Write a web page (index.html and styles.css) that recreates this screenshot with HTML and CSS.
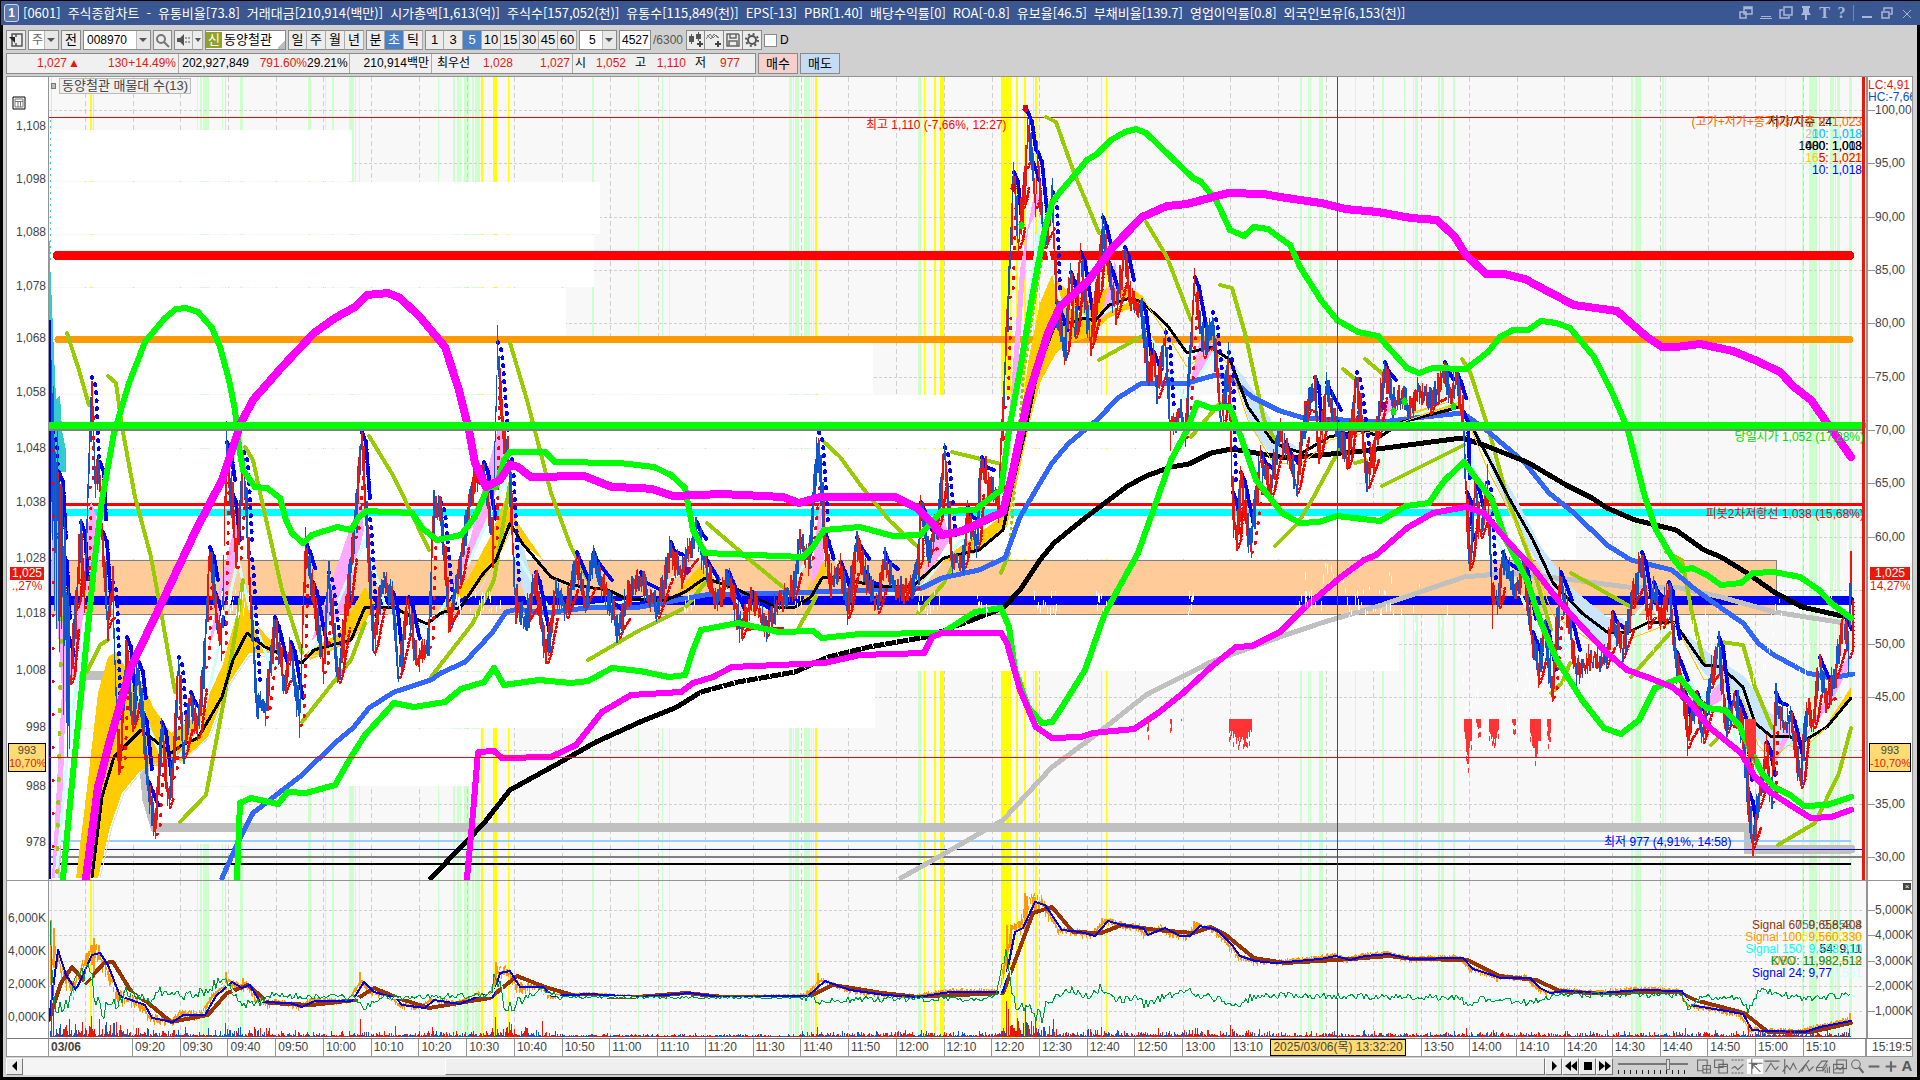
FILE: index.html
```html
<!DOCTYPE html>
<html lang="ko">
<head>
<meta charset="utf-8">
<title>[0601] 주식종합차트</title>
<link rel="stylesheet" href="styles.css">
</head>
<body>
<header class="title">
  <span class="title-num">1</span>
  <h1 class="title-text"><span>[0601]</span><span>주식종합차트</span><span>-</span><span>유통비율[73.8]</span><span>거래대금[210,914(백만)]</span><span>시가총액[1,613(억)]</span><span>주식수[157,052(천)]</span><span>유통수[115,849(천)]</span><span>EPS[-13]</span><span>PBR[1.40]</span><span>배당수익률[0]</span><span>ROA[-0.8]</span><span>유보율[46.5]</span><span>부채비율[139.7]</span><span>영업이익률[0.8]</span><span>외국인보유[6,153(천)]</span></h1>
  <div class="title-tools">
    <button aria-label="분리"><svg width="14" height="14"><path d="M5 1h8v7H5zM5 2.5h8M1 6h6v6H1z" fill="none" stroke="#a9b8da" stroke-width="1.500"/></svg></button>
    <button aria-label="접기"><svg width="14" height="14"><path d="M1 12.500h12M2 10.500h10" stroke="#a9b8da"/></svg></button>
    <button aria-label="복사"><svg width="14" height="14"><path d="M5 1h8v8H5zM4 4H1v8h9v-2" fill="none" stroke="#a9b8da" stroke-width="1.500"/></svg></button>
    <button aria-label="고정"><svg width="14" height="14"><path d="M3 0h8v2h-1v4l2 3H2l2-3V2H3zM6 9h2v5H6z" fill="#a9b8da"/></svg></button>
    <button class="glyph" aria-label="글꼴">T</button>
    <button class="glyph" aria-label="도움말">?</button>
    <i class="sep"></i>
    <button aria-label="최소화"><svg width="14" height="14"><path d="M2 11h10" stroke="#a9b8da" stroke-width="2"/></svg></button>
    <button aria-label="이전 크기"><svg width="14" height="14"><path d="M4 5V2h8v6h-2M2 6h7v6H2z" fill="none" stroke="#a9b8da" stroke-width="1.500"/></svg></button>
    <button aria-label="닫기"><svg width="14" height="14"><path d="M3 4l8 8M11 4l-8 8" stroke="#a9b8da"/></svg></button>
  </div>
</header>

<div class="frame">
<div class="toolbar">
  <button class="ib w20" aria-label="목록"><svg width="16" height="14"><path d="M4 1h10v12H4zM8 1v3M8 10v3" fill="none" stroke="#555" stroke-width="1.500"/><path d="M1 4l6 6V4z" fill="#222"/></svg></button>
  <select class="combo w31 dim" aria-label="구분"><option>주</option></select>
  <button class="ib w20">전</button>
  <select class="combo w68" aria-label="종목코드"><option>008970</option></select>
  <button class="ib w19" aria-label="검색"><svg width="15" height="15"><circle cx="6" cy="6" r="4" fill="none" stroke="#777" stroke-width="2"/><path d="M9 9l5 5" stroke="#777" stroke-width="2"/></svg></button>
  <div class="group"><button class="ib w19" aria-label="소리"><svg width="15" height="14"><path d="M1 5h3l4-4v12L4 9H1z" fill="#555"/><path d="M10 4v2M10 8v2M13 4v2M13 8v2" stroke="#555"/></svg></button><button class="ib w10" aria-label="소리 메뉴"><i class="tri"></i></button></div>
  <div class="name"><b>신</b><span>동양철관</span></div>
  <div class="group"><button class="ib">일</button><button class="ib">주</button><button class="ib">월</button><button class="ib">년</button></div>
  <div class="group"><button class="ib">분</button><button class="ib on">초</button><button class="ib">틱</button></div>
  <div class="group"><button class="ib">1</button><button class="ib">3</button><button class="ib on">5</button><button class="ib">10</button><button class="ib">15</button><button class="ib">30</button><button class="ib">45</button><button class="ib">60</button></div>
  <select class="combo w38 mid" aria-label="간격"><option>5</option></select>
  <input class="num" aria-label="봉 개수" value="4527"><span class="total">/6300</span>
  <div class="group icons">
    <button class="ib" aria-label="봉 추가"><svg width="16" height="16"><path d="M1 4h5v6H1zM8 2h5v5H8zM3 2h1v10H3zM10 0h1v9h-1z" fill="#555"/><path d="M12 9v6M9 12h6" stroke="#444" stroke-width="2"/></svg></button>
    <button class="ib" aria-label="지표 추가"><svg width="16" height="16"><path d="M0 7l4-5 3 4 3-3 3 3M1 3l4 4 3-5 4 4" fill="none" stroke="#777"/><path d="M12 9v6M9 12h6" stroke="#444" stroke-width="2"/></svg></button>
    <button class="ib" aria-label="저장"><svg width="16" height="16"><path d="M2 2h11l1 1v11H2zM5 2v4h6V2M4 14V9h8v5" fill="none" stroke="#666" stroke-width="1.500"/></svg></button>
    <button class="ib" aria-label="설정"><svg width="16" height="16"><circle cx="8" cy="8" r="4" fill="none" stroke="#555" stroke-width="2"/><circle cx="8" cy="8" r="6" fill="none" stroke="#555" stroke-width="2" stroke-dasharray="2 2.700"/></svg></button>
  </div>
  <label class="chk"><input type="checkbox">D</label>
</div>

<div class="quote">
  <div class="quote-box">
    <span class="c r w60">1,027</span><span class="c r w13">▲</span><span class="c r w48">130</span><span class="c r w51 line">+14.49%</span>
    <span class="c w71">202,927,849</span><span class="c r w58">791.60%</span><span class="c w42 line">29.21%</span>
    <span class="c w82 line">210,914백만</span><span class="c w38">최우선</span><span class="c r w44">1,028</span><span class="c r w57 line">1,027</span>
    <span class="c w13">시</span><span class="c r w40">1,052</span><span class="c w20">고</span><span class="c r w40">1,110</span><span class="c w20">저</span><span class="c r w34">977</span>
  </div>
  <button class="trade buy">매수</button><button class="trade sell">매도</button>
</div>

<main class="charts">
  <div class="axis left" id="axL"><svg class="gridicon" width="14" height="14"><path d="M1 1h12v12H1z" fill="#fff" stroke="#000"/><path d="M3 3h8v8H3zM3 5.500h8M6 5v6M8.500 5v6" fill="none" stroke="#777"/></svg>
    <div class="tag red">1,025</div><div class="tag plain">.,27%</div><div class="tag gold">993<em>10,70%</em></div>
  </div>
  <div class="plot main">
    <svg id="main" viewBox="49 77 1817 803" preserveAspectRatio="none" role="img" aria-label="가격 차트"></svg>
    <div class="chip"><i></i><span>동양철관 매물대 수(13)</span></div>
    <span class="note hi">최고 1,110 (-7,66%, 12:27)</span>
    <span class="note lo">최저 977 (4,91%, 14:58)</span>
    <span class="note open">당일시가 1,052 (17,28%)</span>
    <span class="note pivot">피봇2차저항선 1,038 (15,68%)</span>
    <div class="legend">
      <p><span class="under l1b">저가/지수 24</span><span class="l1">(고가+저가+종가)/3 가중 8: 1,023</span></p>
      <p><span class="under c0">200: 1,018</span><span class="c1">10: 1,018</span></p>
      <p><span class="under c2">1000: 1,013</span><span class="c2">480: 1,008</span></p>
      <p><span class="under c3">165: 1,022</span><span class="c4">5: 1,021</span></p>
      <p><span class="under c5">310: 1,018</span><span class="c6">10: 1,018</span></p>
    </div>
  </div>
  <div class="axis right" id="axR"><span class="lc">LC:4,91</span><span class="hc">HC:-7,66</span>
    <div class="tag red">1,025</div><div class="tag plain">14,27%</div><div class="tag gold">993<em>-10,70%</em></div>
  </div>
  <div class="axis left sub" id="sxL"></div>
  <div class="plot sub">
    <svg id="sub" viewBox="49 881 1817 157" preserveAspectRatio="none" role="img" aria-label="거래량 지표"></svg>
    <div class="legend low">
      <p><span class="under t1">750: 9,658,4</span><span class="s1">Signal 60: 9,658,408</span></p>
      <p><span class="under t2">100: 9,560,39</span><span class="s2">Signal 100: 9,560,330</span></p>
      <p><span class="under c2">54: 9,11</span><span class="s3">Signal 150: 9,488,310</span></p>
      <p><span class="under s2">OBV: 11,982,618</span><span class="s4">KVO: 11,982,512</span></p>
      <p><span class="c6">Signal 24: 9,77</span><span class="c5">4,551</span></p>
    </div>
  </div>
  <div class="axis right sub" id="sxR"><button class="close" aria-label="닫기">×</button></div>
  <div class="time-left"></div>
  <div class="time" id="time"><span class="cursor-time">2025/03/06(목) 13:32:20</span></div>
  <div class="time-right">15:19:5</div>
</main>

<footer class="foot">
  <button class="ib s" aria-label="왼쪽"><svg width="10" height="12"><path d="M7 1v10L2 6z"/></svg></button>
  <div class="track"><div class="thumb"></div></div>
  <button class="ib s" aria-label="재생"><svg width="10" height="12"><path d="M3 1v10l5-5z"/></svg></button>
  <button class="ib s" aria-label="뒤로"><svg width="12" height="12"><path d="M6 1v10L0 6zM12 1v10L6 6z"/></svg></button>
  <button class="ib s" aria-label="정지"><svg width="10" height="12"><path d="M1 2h8v8H1z"/></svg></button>
  <button class="ib s" aria-label="앞으로"><svg width="12" height="12"><path d="M0 1v10l6-5zM6 1v10l6-5z"/></svg></button>
  <input class="speed" type="range" min="0" max="11" value="8" aria-label="속도">
  <div class="tools">
    <svg viewBox="0 0 14 14"><path d="M1 1h9v5H6v5H1zM6 6h7v7H6zM9.500 6v7M6 9.500h7"/></svg>
    <svg viewBox="0 0 14 14"><path d="M1 1h8v7H1zM5 5h8v8H5zM5 7h8"/></svg>
    <svg viewBox="0 0 14 14"><path d="M1 1h12M1 13h12" stroke-dasharray="2 1"/><path d="M1 9l3-2 3 3 5-5"/></svg>
    <svg viewBox="0 0 14 14" class="sel"><path d="M1 4h13M4 0v14M5 5l7 7M5 9V5h4"/></svg>
    <svg viewBox="0 0 14 14"><path d="M0 2h14M1 12l5-8 4 6 3-3"/></svg>
    <svg viewBox="0 0 14 14"><path d="M3 0v14M1 12l4-6 3 4 3-6 3 6"/></svg>
    <svg viewBox="0 0 14 14"><path d="M0 13L10 1M3 12l4-7 3 6 4-4"/></svg>
    <svg viewBox="0 0 14 14"><path d="M1 8l5-6h5l-4 6zM1 8v3h6V8M7 11l4-6M9 13v-3M11 13V8M13 13V7"/></svg>
    <svg viewBox="0 0 14 14"><path d="M4 1h9v8H4zM1 5h9v8H1zM2 10l3-2 2 2 3-3"/></svg>
    <svg viewBox="0 0 14 14"><circle cx="6" cy="5" r="4"/><path d="M9 8l4 5" stroke-width="2"/></svg>
    <svg viewBox="0 0 14 14"><path d="M2 7h10" stroke-width="2"/></svg>
    <svg viewBox="0 0 14 14"><path d="M2 7h10M7 2v10" stroke-width="2"/></svg>
    <b>A</b>
  </div>
</footer>
</div>
<script src="chart.js"></script>
</body>
</html>
```
FILE: styles.css
```css
*{box-sizing:border-box}
body{margin:0;min-height:100vh;display:flex;flex-direction:column;background:#000;padding:1px 0 3px;
  font:12px/14px "Liberation Sans","Noto Sans CJK KR",sans-serif;color:#000}
button,input,select{font:inherit;color:inherit;margin:0;padding:0;border:0;background:none}
h1,p{margin:0;font:inherit}
svg{display:block}
.title{height:24px;background:#3a5792;color:#fff;display:flex;align-items:center;margin-left:1px;padding:0 6px 0 3px}
.title-num{width:15px;height:18px;border:1px solid #cdd6ea;border-radius:3px;background:#6079ad;text-align:center;font-weight:bold;line-height:16px}
.title-text{display:flex;gap:7px;margin-left:4px;white-space:nowrap;flex:1;font:13px/16px "Noto Sans CJK KR",sans-serif}
.title-tools{display:flex;gap:6px;align-items:center;color:#a9b8da}
.glyph{font:bold 16px/16px "Liberation Serif",serif;width:11px}
.sep{width:1px;height:16px;background:#7487b0}
.frame{flex:1;display:flex;flex-direction:column;background:#d0d0d0;margin:0 3px 0 3px;padding:5px 3px 2px}
.toolbar{display:flex;height:20px;gap:2px;align-items:stretch}
.group{display:flex}
.ib{width:19px;height:20px;border:1px solid #8a8a8a;background:#ececec;display:flex;align-items:center;justify-content:center;flex:none;font-size:13px}
.group .ib+.ib{border-left:0}
.group .ib{border-right-color:#aaa}
.icons .ib{border-color:#8a8a8a}
.ib.on{background:#4a80c4;color:#fff}
.w20{width:20px}.w19{width:19px}.w10{width:10px}
.combo{appearance:none;border:1px solid #8a8a8a;padding-left:3px;height:20px;border-radius:0;
  background:url("data:image/svg+xml,%3Csvg xmlns='http://www.w3.org/2000/svg' width='14' height='18'%3E%3Cpath d='M0 0h14v18H0z' fill='%23e8e8e8'/%3E%3Cpath d='M0 0v18' stroke='%238a8a8a'/%3E%3Cpath d='M3 7h8l-4 4z' fill='%23555'/%3E%3C/svg%3E") right/14px 18px no-repeat #fff}
.w31{width:31px}.w68{width:68px}.w38{width:38px}.mid{padding-left:9px}.dim{color:#666}
.tri{border:3px solid transparent;border-top:4px solid #555;border-bottom:0}
.name{display:flex;width:81px;height:20px;border:1px solid #8a8a8a;background:linear-gradient(135deg,transparent 50%,#bbb 50%) right bottom/8px 8px no-repeat #fff;align-items:center;gap:2px;font-size:13px}
.name b{width:16px;height:16px;background:#93a02c;color:#fff;font-weight:normal;text-align:center;line-height:16px}
.num{width:32px;border:1px solid #8a8a8a;background:#fff;padding-left:2px}
.total{align-self:center;color:#555;width:31px}
.chk{display:flex;align-items:center;gap:3px}
.chk input{appearance:none;width:13px;height:13px;border:1px solid #8a8a8a;background:#fff}
.quote{display:flex;gap:2px;height:21px;margin-top:3px}
.quote-box{display:flex;width:750px;border:1px solid #8a8a8a;background:#f0f0f0;align-items:center}
.c{text-align:right;white-space:nowrap;line-height:19px;flex:none}
.line{border-right:1px solid #aaa;padding-right:2px}
.r{color:#e8190c}
.w60{width:60px}.w13{width:13px}.w48{width:48px}.w51{width:51px}.w71{width:70px}.w58{width:58px}.w42{width:43px}.w82{width:82px}.w44{width:43px}.w57{width:60px}.w40{width:40px}.w34{width:34px}
.w38.c{width:38px}.w20.c{width:20px}
.trade{width:40px;border:1px solid #8a8a8a;font-size:13px}
.buy{background:#f5d0cc}.sell{background:#c5dcf3}
.charts{flex:1;margin-top:2px;margin-right:1px;border:1px solid #949494;display:grid;grid-template-columns:41px 1fr 46px;grid-template-rows:803fr 158fr 18px;background:#fff;min-height:700px}
.plot{position:relative;overflow:hidden;min-height:0;background:#f8f8f8;border-left:1px solid #949494}
.plot svg{width:100%;height:100%;position:absolute;inset:0;shape-rendering:crispEdges}
.axis{position:relative;overflow:hidden;color:#444}
.axis.right{border-left:2px solid #949494}
.sub{border-top:1px solid #949494}
.tick{position:absolute;transform:translateY(-50%);white-space:nowrap}
.left .tick{right:2px}
.right .tick{left:7px}
.right .tick::before{content:"";position:absolute;right:100%;top:7px;width:7px;height:1px;background:#949494}
.gridicon{position:absolute;left:5px;top:19px}
.tag{position:absolute;left:3px;width:34px;text-align:center;height:13px;line-height:13px;overflow:hidden}
.right .tag{left:2px;width:40px}
.tag.red{background:#e8190c;color:#fff;top:61%}
.tag.plain{color:#e8190c;top:62.700%;background:#fff}
.tag.gold{height:29px;background:#ffdc73;border:1px solid #000;left:1px;width:38px;top:83%;font-size:11px}
.right .tag.gold{left:1px;width:42px}
.tag em{display:block;font-style:normal;color:#e8190c;white-space:nowrap}
.lc,.hc{position:absolute;left:0;top:1px;color:#e8190c;white-space:nowrap}
.hc{top:13px;color:#0b50c8}
.chip{position:absolute;left:2px;top:1px;display:flex;align-items:center;gap:3px}
.chip i{width:5px;height:6px;border:1px solid #777;background:#bbb}
.chip span{border:1px solid #bbb;background:#f0f0f0;padding:0 2px;color:#444;font-size:13px}
.note{position:absolute;white-space:nowrap}
.hi{color:red;right:47.300%;top:5.100%}
.lo{color:#00f;right:7.400%;top:94.400%}
.open{color:#0d0;right:2px;top:44%}
.pivot{color:red;right:2px;top:53.600%}
.legend{position:absolute;right:4px;top:39px;text-align:right;white-space:nowrap;line-height:12px}
.legend p{position:relative}
.legend p>span:last-child{position:relative}
.legend .under{position:absolute;right:0}
.l1{color:#ff6400}.legend .l1b{right:30px}.c0{color:#c0c0c0}.c1{color:#00c8ff}.c2{color:#000}.c3{color:#fc0}.c4{color:red}.c5{color:#cff}.c6{color:#00f}
.low{top:38px}.s1{color:#930}.s2{color:#f90}.s3{color:#0ff}.s4{color:#093}.t1{color:#2a9d8f}.t2{color:#ff0}
.close{position:absolute;right:1px;top:2px;width:8px;height:7px;background:#444;color:#fff;font-size:8px;line-height:6px}
.time,.time-left,.time-right{border-top:1px solid #777;color:#444;line-height:17px}
.time{display:flex;position:relative;border-left:1px solid #949494}
.t{flex-basis:0;min-width:0;text-indent:2px;box-shadow:inset -1px 0 #949494}
.time-right{border-left:1px solid #949494;padding-left:5px;overflow:hidden}
.cursor-time{position:absolute;left:67.200%;top:0;bottom:0;width:136px;background:#ffdc73;border:1px solid #000;line-height:15px;text-align:center;white-space:nowrap}
.foot{display:flex;height:18px;align-items:center}
.foot .s{width:17px;height:17px;border-color:#fff #777 #777 #fff}
.track{flex:1;background:#f4f4f4;height:17px;display:flex;justify-content:flex-end}
.thumb{width:72.300%;background:#efefef;border:1px solid;border-color:#fff #777 #777 #fff}
.speed{appearance:none;width:70px;height:17px;margin:0 8px 0 5px;background:linear-gradient(#777,#777) 0 5px/100% 2px no-repeat,repeating-linear-gradient(90deg,#222 0 1px,transparent 1px 6px) 0 12px/100% 4px no-repeat}
.speed::-webkit-slider-thumb{appearance:none;width:4px;height:11px;background:#ddd;border:1px solid #777;margin-top:-4px}
.tools{display:flex;gap:1px;align-items:center}
.tools svg{width:16px;height:15px;fill:none;stroke:#666;stroke-width:1}
.tools .sel{background:#fff}
.tools b{width:14px;text-align:center;color:#555;font-size:15px}
```
FILE: chart.js
```javascript
const SVG = 'http://www.w3.org/2000/svg';
let seed = 7;
const rnd = () => (seed = (seed * 16807) % 2147483647) / 2147483647;
const add = (s, tag, a) => { const e = document.createElementNS(SVG, tag); for (const k in a) e.setAttribute(k, a[k]); s.appendChild(e); return e; };
const line = (s, pts, c, w, extra) => add(s, 'polyline', Object.assign({ points: pts, fill: 'none', stroke: c, 'stroke-width': w, 'stroke-linejoin': 'round', 'stroke-linecap': 'round' }, extra));
const poly = (s, pts, c) => add(s, 'polygon', { points: pts, fill: c });
const rect = (s, x, y, w, h, c) => add(s, 'rect', { x, y, width: w, height: h, fill: c });
const parse = t => t.trim().split(/\s+/).map(p => p.split(',').map(Number));
const at = (p, x) => { for (let i = 1; i < p.length; i++) if (x <= p[i][0]) { const [a, b] = [p[i - 1], p[i]]; return a[1] + (b[1] - a[1]) * (x - a[0]) / ((b[0] - a[0]) || 1); } return p[p.length - 1][1]; };

const M = document.getElementById('main'), S = document.getElementById('sub');
const TIMES = [];
for (let k = -1; k <= 35; k++) TIMES.push(133 + 47.73 * k);

// background stripes: x,width
const green = '197,1 200,2 203,6 222,1 240,3 308,3 325,1 332,2 349,5 355,1 359,1 438,1 453,2 457,2 460,1 464,5 472,2 475,5 592,2 638,1 662,1 669,1 789,3 793,1 795,4 804,6 811,1 813,1 918,3 1300,2 1308,1 1310,1 1319,4 1355,1 1382,2 1404,1 1413,1 1415,3 1438,2 1441,3 1453,2 1631,2 1635,6 1662,2 1665,1 1785,1 1802,2 1809,8 1819,1 1830,4 1835,1 1837,3 1849,3';
const yellow = '51,1 90,2 93,1 225,1 481,2 493,4 508,1 815,2 924,1 934,2 940,4 1001,4 1006,3 1010,1 1016,2 1024,2 1033,1 1035,2 1101,1 1106,1';
for (const [s, y, h] of [[M, 77, 803], [S, 881, 157]]) {
  for (const [x, w] of parse(green)) rect(s, x, y, w, h, '#ccffcc');
  for (const [x, w] of parse(yellow)) rect(s, x, y, w, h, '#ffff00');
  for (const x of TIMES) line(s, `${x},${y} ${x},${y + h}`, '#cfcfcf', 1, { 'stroke-dasharray': '5 3', 'stroke-linecap': 'butt' });
}
for (let i = 0; i < 15; i++) { const y = Math.round(110 + 53.35 * i) + .5; line(M, `49,${y} 1862,${y}`, '#cfcfcf', 1, { 'stroke-dasharray': '3 2', 'stroke-linecap': 'butt' }); }
for (const y of [910, 935, 961, 986, 1011]) line(S, `49,${y}.5 1862,${y}.5`, '#cfcfcf', 1, { 'stroke-dasharray': '3 2', 'stroke-linecap': 'butt' });

// volume profile: top,bottom,right
for (const [t, b, r] of [[130, 181, 352], [182, 234, 600], [235, 287, 594], [288, 339, 566], [340, 394, 873], [395, 448, 1409], [449, 504, 1356], [505, 559, 1576], [615, 671, 1399], [672, 728, 875], [729, 786, 480], [787, 844, 243], [845, 879, 100]]) rect(M, 50, t, r - 50, b - t, '#fff');
add(M, 'rect', { x: 49, y: 560.5, width: 1727, height: 54, fill: '#ffcc99', stroke: '#808080' });

const hline = (y, w, c, a = 49, b = 1863) => line(M, `${a},${y} ${b},${y}`, c, w);
hline(255.5, 9, '#f00', 57, 1850); hline(339.5, 7, '#f90', 58, 1850);
hline(512.5, 7, '#0ff', 64, 1860); hline(504.5, 3, '#f00');
hline(600.5, 9, '#00f', 49, 1850);
line(M, '55,480 57,583 67,675 112,676 118,757 143,757 147,800 155,827 1748,827 1748,849 1851,849', '#c0c0c0', 9, { 'stroke-linejoin': 'miter' });
hline(841, 2, '#99ccff', 55, 1850); hline(849.5, 1, '#00f'); hline(857, 2, '#808080'); hline(864, 2, '#000', 49, 1850);
hline(117.5, 1, '#f00');

// clouds
for (const p of ['76,878 88,780 98,693 108,657 116,652 127,670 143,683 153,707 171,733 180,743 171,762 141,770 122,793 110,827 98,878',
  '171,733 200,713 222,667 237,613 245,590 255,623 273,643 302,660 270,653 249,653 229,683 208,737 180,763',
  '306,653 339,633 359,597 365,587 375,603 363,627 351,642 310,660',
  '441,613 469,577 490,537 506,497 518,523 543,560 510,533 494,567 473,590',
  '673,597 699,567 718,580 685,594', '803,600 820,557 828,568 822,580 816,600', '1390,424 1415,411 1455,400 1458,406 1415,420',
  '922,580 942,560 979,533 1001,517 1013,480 1028,363 1040,303 1052,275 1069,293 1089,300 1107,288 1130,287 1144,297 1146,305 1126,310 1109,318 1089,337 1069,343 1056,353 1040,383 1028,430 1016,487 1007,527 979,552 944,562',
  '1823,730 1851,687 1851,698']) { poly(M, p, '#fc0'); }
for (const p of ['1230,360 1244,377 1256,395 1282,438 1302,450 1273,457 1252,430', '1472,423 1517,500 1541,547 1574,590 1607,617 1623,618 1627,637 1602,653 1578,627 1553,590 1509,513',
  '1672,623 1709,653 1745,677 1770,713 1811,733 1794,743 1772,757 1753,733 1741,700 1704,673', '510,530 522,540 534,590 530,610 520,580']) poly(M, p, '#cce5ff');
for (const p of ['52,878 62,690 56,600 73,660 91,500 98,523 88,580 76,667 66,687 60,878', '1009,420 1020,270 1036,183 1040,203 1028,230 1018,370', '208,650 219,590 236,520 240,500 236,560 222,610',
  '312,640 325,600 360,500 364,530 345,610', '441,610 470,540 500,420 506,460 480,540', '810,590 820,500 824,560', '922,580 942,510 950,540 930,570', '1100,320 1115,260 1120,300', '1186,400 1200,340 1216,345', '1380,420 1390,395 1392,410', '1705,710 1720,670 1722,700', '1772,770 1788,720 1790,735', '1806,735 1830,690 1850,640 1850,665 1830,705'])
  poly(M, p, '#ffaaff');
poly(M, '49,220 50,260 53,330 56,400 60,395 62,430 66,450 66,472 58,472 50,420', '#33cccc');
line(M, '50,120 50,260', '#33cccc', 1, { 'stroke-dasharray': '2 4' });
line(M, '100,878 112,827 124,793 143,770 165,760 182,762 210,737 231,683 250,655 290,660 320,655 360,630 380,612 430,625 480,590 510,530', '#cce5ff', 1);
line(M, '56,878 66,770 74,700 90,600 104,530 118,640 150,730 168,770 200,730 238,560 250,610 270,665 300,670 330,620 365,540 385,605 430,630 470,560 505,480 520,560 550,610 640,600 700,560 740,605 780,610 822,530 850,590 915,595 950,550 1000,510 1025,330 1040,220 1060,300 1090,320 1130,300 1185,400 1215,350 1240,440 1270,470 1320,430 1370,430 1460,400 1480,500 1540,640 1600,655 1650,600 1700,700 1720,680 1755,810 1790,740 1851,650', '#ccffff', 3);
line(M, '901,878 942,855 1003,820 1052,767 1093,737 1146,695 1211,662 1280,637 1321,623 1382,605 1464,577 1509,573 1574,580 1627,587 1680,588 1721,597 1774,612 1851,624', '#c0c0c0', 5);

const olive = ['67,333 78,367 89,405', '108,376 116,383 122,427 135,497 151,557 163,623 175,692', '87,672 100,645 108,640', '180,822 206,795 224,700 237,623 243,580', '245,447 253,460 261,497 282,590 302,653', '302,722 351,660 365,623', '369,436 394,477 429,550', '431,677 473,623 494,580 510,483', '510,343 527,400 551,493 571,547 588,580', '588,660 640,630 685,608 705,583', '707,523 750,560 789,592', '799,627 816,597', '822,440 840,457 862,487 889,520 918,547', '952,452 1001,464', '918,613 944,583 952,567', '1001,573 1009,553', '1046,117 1056,122 1073,170 1099,233', '1099,360 1144,335', '1146,222 1167,257 1191,320', '1220,285 1232,288 1246,337 1264,420 1277,443', '1191,437 1220,403', '1275,546 1298,523 1313,498 1339,450', '1343,369 1355,379', '1365,359 1384,375', '1382,486 1464,445', '1355,463 1366,460', '1462,359 1470,372 1488,427 1507,497 1533,567 1551,630', '1551,693 1562,683 1570,663', '1571,573 1631,607', '1631,677 1670,633', '1666,552 1682,560 1692,613 1704,663', '1721,642 1743,645 1755,687 1772,728', '1711,745 1721,735', '1778,845 1815,823 1839,773 1851,728'];
for (const p of olive) line(M, p, '#99cc00', 4);
line(M, '1009,553 1013,507 1024,370 1042,257', '#99cc00', 3, { 'stroke-dasharray': '1 5' });
line(M, '62,480 61,650 57,878', '#99cc00', 4, { 'stroke-dasharray': '1 22' });

line(M, '222,878 239,840 253,813 302,775 335,743 353,728 369,708 394,692 431,680 441,673 465,662 492,633 506,612 518,609 543,613 596,607 640,607 705,595 816,592 922,588 942,578 979,570 1005,558 1020,517 1040,483 1052,463 1069,443 1097,420 1118,398 1142,383 1187,383 1216,375 1230,378 1252,397 1280,411 1304,418 1382,422 1415,418 1462,413 1484,428 1525,463 1549,493 1574,513 1607,545 1631,560 1672,570 1696,590 1721,608 1743,623 1758,643 1774,655 1807,673 1831,678 1853,674', '#3366ff', 5);
line(M, '431,878 465,843 484,823 510,790 559,763 596,742 640,722 677,707 701,692 738,682 795,672 828,657 869,647 926,637 967,622 1003,608 1020,590 1040,560 1054,543 1085,518 1109,500 1126,487 1146,476 1171,467 1189,464 1211,453 1232,449 1280,457 1300,457 1362,451 1462,438 1484,445 1529,463 1566,485 1592,498 1607,508 1635,520 1676,530 1704,550 1721,557 1747,573 1774,592 1802,607 1851,618', '#000', 5);
line(M, '700,695 740,682 795,671 828,656 869,646 926,636 967,622', '#fff', 5, { 'stroke-dasharray': '1 11', 'stroke-linecap': 'butt' });

// faint white ticks
const ghost = parse('1295,600 1306,575 1314,600 1328,570 1350,600 1357,590 1380,610 1384,580 1395,605 1404,640 1420,600 1436,650 1444,610 1456,620 1464,700 1490,710 1525,690 1550,700 1585,695 1600,660 1640,610 1652,640 1690,640 1715,620 1735,690 1765,660 1775,600 1800,680 1820,590 1850,550');
for (let x = 1295; x < 1851; x += 2) if (rnd() < .6) rect(M, x, Math.round(at(ghost, x) + (rnd() - .5) * 40), 1, 2 + Math.round(rnd() * 9), '#fff');

// price swings
const swings = parse('50,430 52,440 55,530 58,480 62,560 66,640 70,675 76,600 80,530 84,600 88,480 91,385 95,480 99,470 102,540 107,620 112,590 117,740 120,760 126,645 132,720 138,670 142,720 148,790 155,827 161,730 168,800 172,770 178,665 183,750 190,700 197,730 204,660 209,555 214,600 221,645 226,450 231,500 236,560 243,460 248,560 256,700 265,710 274,625 284,685 290,650 299,718 305,550 312,590 323,665 328,580 338,675 347,600 354,530 361,440 366,520 373,645 382,580 392,600 398,670 408,605 416,660 428,640 433,515 440,510 449,620 458,580 466,520 474,480 483,470 492,540 497,350 504,450 508,460 515,600 525,620 535,580 546,655 555,590 566,610 576,560 585,600 593,560 608,600 618,630 628,590 640,580 657,610 670,550 680,575 696,530 703,560 715,600 728,580 741,630 752,600 766,628 780,600 793,590 799,545 808,560 818,440 824,540 830,580 840,570 847,610 856,545 866,580 877,605 884,560 895,590 910,590 918,560 920,510 928,550 937,520 944,455 952,560 963,560 967,515 976,540 981,465 990,490 998,500 1003,400 1008,290 1013,180 1018,240 1022,200 1026,160 1027,120 1032,170 1035,200 1037,160 1044,240 1052,200 1056,310 1064,350 1070,280 1074,330 1080,260 1090,340 1097,290 1102,225 1108,270 1115,310 1124,255 1130,300 1141,310 1148,380 1153,360 1157,390 1165,340 1170,430 1180,410 1185,430 1194,285 1203,350 1212,320 1221,420 1228,360 1232,500 1236,540 1240,480 1250,545 1260,460 1270,490 1278,430 1285,450 1296,485 1306,410 1314,385 1318,450 1326,390 1337,430 1347,460 1356,380 1367,480 1377,430 1384,370 1392,400 1404,400 1410,410 1419,390 1430,405 1444,370 1450,400 1456,380 1463,420 1466,500 1469,560 1475,490 1480,530 1487,490 1492,600 1498,600 1502,560 1516,590 1523,570 1532,640 1538,675 1544,630 1552,690 1560,580 1568,620 1576,670 1590,660 1605,660 1612,620 1622,650 1632,600 1641,560 1648,620 1653,590 1662,620 1668,590 1676,660 1684,700 1687,740 1696,700 1702,735 1710,680 1718,645 1726,725 1735,700 1743,740 1748,800 1752,840 1758,800 1766,750 1771,795 1775,700 1783,725 1790,720 1800,780 1806,710 1813,720 1819,665 1826,700 1835,670 1843,620 1848,650 1850,572');

line(M, '92,877 102,797 114,757 141,730 171,753 182,745 198,738 222,697 233,660 247,633 265,647 302,663 314,650 351,640 365,607 394,608 427,624 441,613 461,607 482,575 496,560 510,523 522,543 551,577 571,585 608,590 627,599 664,601 685,592 705,578 734,588 775,607 795,607 811,597 822,578 840,577 877,587 913,586 944,558 979,550 1003,530 1013,483 1024,437 1038,370 1054,327 1069,323 1085,318 1095,321 1109,305 1130,298 1142,302 1167,325 1187,353 1211,347 1230,360 1248,407 1273,442 1284,447 1302,453 1329,437 1362,430 1380,437 1402,422 1460,407 1472,427 1488,457 1509,498 1533,540 1553,583 1582,613 1607,632 1627,633 1647,623 1674,622 1704,665 1721,667 1743,687 1755,723 1772,737 1788,736 1802,742 1827,727 1851,698', '#000', 3);
line(M, '1144,300 1167,335 1187,367 1211,350 1230,365 1248,420 1273,463 1300,465 1330,440 1380,430 1460,402 1488,470 1527,545 1553,615 1607,652 1627,640 1674,622 1704,680 1721,678 1743,700 1758,745 1772,760 1788,745 1802,750 1827,727', '#fc0', 1);

for (let i = 1; i < swings.length; i++) {
  const [x0, y0] = swings[i - 1], [x1, y1] = swings[i], d = y1 - y0;
  if (Math.abs(d) < 25) continue;
  if (d > 0) line(M, `${x0 + 1},${y0 - 8} ${x0 + 5},${y0 + 2} ${x1 + 4},${y1 - 20}`, '#00f', 4, { 'stroke-dasharray': Math.abs(d) > 80 ? '1 7' : '1 2' });
  else line(M, `${x0 + 2},${y0 + 8} ${x0 + 5},${y0} ${x1 + 3},${y1 + 28}`, '#f00', 3, { 'stroke-dasharray': Math.abs(d) > 80 ? '1 9' : '1 3' });
}
for (const w of [0, 1]) for (let x = 50 + w; x < 1851; x += 2) {
  const y = at(swings, x), slope = Math.abs(at(swings, x + 2) - at(swings, x - 2));
  const h = 5 + rnd() * 16 + Math.min(30, slope * .6), o = (rnd() - .5) * 14;
  rect(M, x, Math.max(118, Math.round(y + o - h / 2)), rnd() < .3 ? 2 : 1, Math.round(h), rnd() < .52 ? '#e8190c' : '#1155cc');
}
for (let x = 50; x < 70; x++) { const t = 330 + (x - 50) * 13; rect(M, x, t + rnd() * 60, 1, 90 + rnd() * 90, rnd() < .5 ? '#e8190c' : '#1155cc'); }
rect(M, 49, 320, 2, 559, '#00c');
line(M, '53,450 53,878', '#f00', 3, { 'stroke-dasharray': '1 32' });

line(M, '63,878 73,773 84,667 95,557 102,500 114,433 129,383 145,342 165,318 176,309 186,308 198,312 212,328 220,347 229,380 235,410 239,447 243,470 255,487 267,488 280,498 286,520 292,533 303,543 312,535 337,527 351,530 359,517 367,511 412,513 422,528 437,540 461,535 475,517 488,487 496,487 504,460 510,452 545,452 555,462 620,463 654,467 671,475 685,488 693,530 705,553 803,557 813,547 824,530 860,527 893,536 920,535 942,511 975,510 1001,490 1009,430 1020,370 1032,297 1044,233 1052,203 1060,192 1073,177 1087,160 1097,154 1111,140 1125,132 1136,129 1146,133 1171,157 1193,178 1201,182 1216,200 1230,230 1244,236 1254,227 1268,229 1280,238 1290,245 1300,267 1321,300 1337,320 1358,332 1378,336 1407,368 1419,373 1433,368 1466,369 1488,352 1500,337 1513,330 1528,330 1541,321 1556,323 1570,328 1594,357 1611,390 1627,427 1645,497 1656,530 1672,557 1682,570 1692,568 1707,575 1721,585 1741,583 1753,573 1774,572 1800,577 1819,590 1831,603 1851,618', '#0f0', 6);
line(M, '237,878 240,803 251,798 278,804 288,792 306,793 335,785 351,757 365,735 394,703 414,707 445,702 461,689 484,682 494,668 504,685 539,680 571,683 588,681 612,668 640,671 669,677 685,675 693,650 701,630 738,623 779,632 813,631 822,638 860,634 942,633 958,623 975,612 1001,608 1009,627 1015,670 1028,707 1042,723 1052,722 1062,707 1085,670 1105,613 1138,553 1164,480 1171,460 1187,430 1197,403 1211,408 1230,407 1242,440 1256,480 1282,513 1300,523 1319,522 1337,516 1380,521 1406,506 1429,503 1439,488 1445,480 1464,462 1492,500 1506,540 1527,580 1541,623 1557,660 1582,700 1604,728 1621,734 1639,720 1655,688 1680,678 1700,703 1707,708 1725,710 1739,725 1749,747 1762,773 1774,787 1790,795 1804,806 1827,805 1851,797', '#0f0', 6);
line(M, '86,878 98,787 110,740 131,667 163,600 196,530 222,480 241,423 253,400 282,367 314,333 335,318 355,307 367,295 388,293 400,298 420,317 445,347 459,390 469,430 475,463 486,487 500,480 510,465 518,467 531,477 584,476 612,487 640,488 652,489 673,496 722,494 783,497 799,503 820,497 895,497 917,508 932,523 942,535 962,531 1003,512 1011,480 1020,437 1028,397 1048,333 1060,307 1089,280 1113,247 1142,217 1167,206 1187,204 1228,193 1264,194 1280,197 1321,203 1345,209 1378,212 1411,218 1437,220 1455,237 1466,255 1486,274 1504,274 1525,279 1549,292 1574,305 1617,311 1647,337 1662,347 1676,347 1700,344 1733,351 1757,361 1780,372 1794,387 1811,400 1827,423 1837,437 1851,457', '#f0f', 8);
line(M, '467,878 473,813 478,752 494,751 502,758 551,757 576,745 602,712 631,695 681,692 693,683 713,677 732,667 824,663 860,655 924,653 932,637 942,633 1001,633 1007,643 1020,690 1036,727 1052,738 1081,737 1093,733 1134,729 1158,713 1183,693 1211,667 1236,647 1252,646 1280,632 1304,608 1341,577 1364,560 1376,555 1407,528 1433,513 1466,507 1484,513 1509,543 1533,568 1558,600 1582,627 1607,653 1627,670 1647,677 1672,687 1688,700 1709,727 1741,753 1755,777 1770,792 1790,805 1811,818 1831,817 1851,810', '#f0f', 6);
hline(425.5, 7, '#0f0'); hline(430, 2, '#808080');

// short white ticks over the lower blue line
for (const c of [225, 235, 245, 460, 475, 485, 495, 690, 800, 922, 935, 981, 1040, 1050, 1101, 1193, 1308, 1355, 1385]) for (let i = 0; i < 7; i++) rect(M, c + rnd() * 12 - 6, 590 + rnd() * 22, 1, 3 + rnd() * 6, '#fff');
// red histogram hanging from 719
for (const [x, w, h] of [[1229, 23, 40], [1464, 8, 62], [1476, 5, 16], [1489, 10, 38], [1530, 11, 58], [1547, 4, 34], [1745, 11, 80], [1147, 2, 14], [1170, 2, 14], [1181, 1, 6], [1512, 4, 12]])
  for (let i = 0; i < w; i++) { const m = 1 - Math.abs(i - w / 2) / w * 1.2, l = h * m * (.5 + rnd() * .4); rect(M, x + i, 719, 1, l, '#f33'); if (rnd() < .4) rect(M, x + i, 719 + l + 4, 1, 5, '#f33'); }
// signal arrows
const arrow = (x, y, d, c) => poly(M, `${x - 2},${y} ${x + 3},${y} ${x + 3},${y + 4 * d} ${x + 5},${y + 4 * d} ${x + .5},${y + 8 * d} ${x - 4},${y + 4 * d} ${x - 2},${y + 4 * d}`, c);
arrow(1025, 105, 1, '#d9001b'); arrow(1013, 184, 1, '#d9001b'); arrow(1021, 229, -1, '#0e0'); arrow(1393, 415, -1, '#0e0'); arrow(1404, 405, -1, '#0e0'); arrow(1453, 410, -1, '#0e0'); arrow(687, 567, 1, '#808'); arrow(1383, 402, 1, '#808');
hline(757.5, 1, '#f00');
rect(M, 1337, 77, 1, 803, '#f00'); rect(S, 1337, 881, 1, 157, '#f00');
rect(M, 1862, 77, 3, 803, '#e8190c');

// lower pane
const sig = parse('49,1020 58,950 66,975 76,990 92,955 100,953 108,965 120,996 145,1005 152,1018 173,1022 183,1015 205,1015 216,996 232,982 242,988 250,985 260,1002 290,1003 302,1007 315,1001 352,1001 364,982 374,992 396,998 402,1005 425,1008 434,1000 460,1004 482,995 493,997 500,973 510,971 520,987 543,987 552,996 590,994 640,997 690,993 720,997 808,996 825,981 850,990 885,995 918,997 950,992 1003,992 1015,932 1023,928 1035,902 1045,905 1062,930 1080,932 1095,936 1108,921 1122,925 1143,928 1148,935 1165,928 1180,936 1190,936 1200,926 1217,930 1232,945 1240,956 1255,961 1275,963 1320,959 1336,956 1350,960 1365,956 1389,954 1410,959 1463,958 1473,969 1492,975 1500,978 1530,978 1540,988 1550,993 1565,991 1600,993 1640,990 1682,991 1690,1005 1720,1010 1743,1014 1752,1030 1765,1031 1805,1032 1820,1027 1851,1021');
const kvo = parse('49,900 52,960 56,1015 65,1005 75,985 88,965 100,1010 115,1008 125,990 135,996 150,1002 160,990 180,996 208,990 222,978 240,1000 255,1006 270,995 355,998 365,1008 380,998 488,995 497,975 505,1010 515,1003 540,990 560,997 810,998 822,1003 835,1000 995,998 1006,955 1013,1002 1025,1012 1040,1018 1055,997 1070,990 1090,998 1101,987 1110,998 1140,1000 1145,1005 1160,998 1190,992 1220,999 1232,1008 1255,995 1460,998 1468,1006 1480,998 1530,1003 1560,995 1680,995 1688,1008 1700,997 1740,998 1748,1010 1760,990 1800,998 1851,995');
const busy = x => x < 125 ? 3 : x < 270 ? 1.5 : x > 490 && x < 530 ? 2.2 : x > 560 && x < 800 ? .4 : x > 1000 && x < 1050 ? 3 : x < 1260 && x > 1050 ? 1.2 : .9;
let g = '';
for (let x = 50; x < 1851; x++) {
  const b = busy(x);
  rect(S, x, at(sig, x + 4) - 1 - rnd() * 3 * b, 1, 2 + rnd() * 4 * b, '#f90');
  if (x % 2 === 0) g += `${x},${(at(kvo, x) + (rnd() - .5) * 7 * b).toFixed(1)} `;
}
for (const [x, y, h] of [[50, 920, 60], [53, 928, 40], [91, 945, 20], [93, 938, 40], [98, 945, 12], [225, 972, 18], [242, 978, 12], [359, 972, 18], [495, 962, 30], [817, 973, 18], [1006, 925, 55], [1010, 925, 30], [1024, 893, 40], [1026, 896, 34], [1034, 897, 14], [1101, 918, 14], [1193, 921, 12], [1849, 1013, 12]]) rect(S, x, y, 2, h, '#f90');
line(S, '49,1020 61,983 72,967 86,983 104,963 113,962 132,993 147,1002 171,1022 208,1015 227,993 248,985 269,1003 312,1005 355,1000 374,988 398,998 429,1008 465,1002 490,998 517,976 545,987 576,996 637,997 686,993 723,997 808,997 833,985 882,993 918,997 960,995 1003,993 1018,953 1033,913 1052,907 1073,932 1101,933 1122,925 1156,930 1193,933 1211,927 1226,935 1254,958 1285,963 1352,959 1389,956 1413,959 1468,960 1499,976 1536,980 1560,991 1603,994 1640,992 1679,992 1695,1000 1744,1013 1768,1032 1811,1032 1851,1023', '#993300', 4);
line(S, sig.join(' '), '#00f', 2);
line(S, kvo.slice(2).map(([x, y]) => `${x + 3},${998 + (y - 998) * .7}`).join(' '), '#ccffff', 2);
line(S, g, '#009933', 1);
for (let x = 50; x < 1851; x++) {
  const h = 1 + rnd() * rnd() * 7 * busy(x);
  rect(S, x, 1037 - h, 1, h, rnd() < .6 ? '#e8190c' : '#1155cc');
}
for (const [x, h] of [[51, 90], [53, 40], [91, 21], [99, 18], [116, 15], [225, 14], [360, 18], [395, 11], [432, 10], [495, 20], [542, 16], [817, 10], [1006, 36], [1008, 28], [1025, 30], [1053, 18], [1101, 10], [1230, 12], [1466, 9], [1685, 9], [1748, 14], [1849, 9]]) rect(S, x, 1037 - h, 1, h, '#e8190c');

// scales
const tick = (id, text, pct) => { const e = document.createElement('span'); e.className = 'tick'; e.textContent = text; e.style.top = pct + '%'; document.getElementById(id).appendChild(e); };
[126, 179, 232, 286, 338, 392, 448, 502, 558, 613, 670, 727, 786, 842].forEach((y, i) => tick('axL', (1108 - 10 * i).toLocaleString('en'), (y - 77) / 8.03));
for (let i = 0; i < 15; i++) if (i !== 9 && i !== 12) tick('axR', (100 - 5 * i) + ',00', (110 + 53.35 * i - 77) / 8.03);
['6,000K', '4,000K', '2,000K', '0,000K'].forEach((t, i) => tick('sxL', t, (918 + 33 * i - 881) / 1.57));
['5,000K', '4,000K', '3,000K', '2,000K', '1,000K'].forEach((t, i) => tick('sxR', t, (910 + 25.3 * i - 881) / 1.57));
const T = document.getElementById('time');
const cell = (t, w, tag) => { const e = document.createElement(tag || 'span'); e.className = 't'; e.textContent = t; e.style.flexGrow = w; T.appendChild(e); };
cell('03/06', 84, 'b');
for (let m = 560; m <= 910; m += 10) cell(m >= 800 && m <= 820 ? '' : String(m / 60 | 0).padStart(2, '0') + ':' + String(m % 60).padStart(2, '0'), m === 910 ? 62 : 47.73);
```
